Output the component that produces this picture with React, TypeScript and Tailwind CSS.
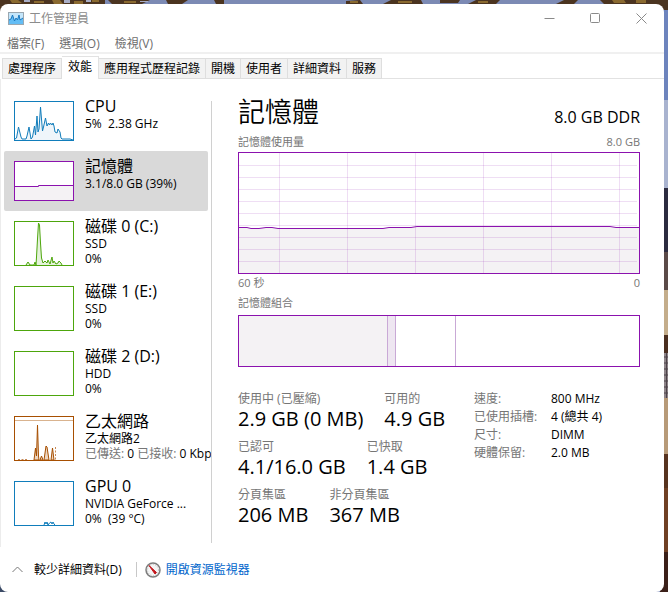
import type { ReactNode } from "react";

const latinAndCjk =
  "font-['Open_Sans','Noto_Sans_CJK_TC',sans-serif]";

const tabs = ["處理程序", "效能", "應用程式歷程記錄", "開機", "使用者", "詳細資料", "服務"];
const menus = ["檔案(F)", "選項(O)", "檢視(V)"];

function Desktop() {
  return (
    <svg
      className="absolute inset-0 h-full w-full"
      viewBox="0 0 668 592"
      preserveAspectRatio="none"
      aria-hidden="true"
    >
      <rect width="668" height="592" fill="#7c8ab4" />
      <g fill="#4b3420">
        <rect x="0" y="0" width="105" height="12" />
        <path d="M108 0h42l-8 4h-30zM166 0h22l-6 4h-14zM214 0h10v4h-8zM346 1l14-1 3 4h-17zM383 4l8-4h30l2 4zM440 0h20l-2 3h-18zM468 4l8-4h24l-4 4zM556 4l8-4h14l-4 4zM600 0h68v10h-8l-4-6h-52z" />
        <path d="M652 0h16v9l-5 2z" />
      </g>
      <g fill="#8a6a30">
        <path d="M10 0h8l4 3h-10zM34 1h10v2h-10zM52 0h8l3 4h-9zM74 1h9v3h-9zM92 0h7v2h-7zM124 1h12v2h-12zM350 1h8v2h-8zM398 1h14v2h-14zM478 1h10v2h-10zM612 0h12l2 3h-12zM636 0h10v3h-10z" />
      </g>
      <path d="M24 0h6v2h-6zM64 0h6v3h-6zM86 0h5v2h-5zM140 1h8v1h-8z" fill="#a9aec6" />
      <rect x="660" y="10" width="8" height="90" fill="#6d84bd" />
      <rect x="660" y="100" width="8" height="88" fill="#a9b3cf" />
      <rect x="660" y="188" width="8" height="64" fill="#2c2b40" />
      <rect x="660" y="252" width="8" height="38" fill="#5b4a48" />
      <rect x="660" y="290" width="8" height="45" fill="#c4ad8b" />
      <rect x="660" y="335" width="8" height="18" fill="#4a2e20" />
      <rect x="660" y="353" width="8" height="45" fill="#8d8388" />
      <path d="M664 357h4M664 363h4M664 369h4M664 375h4M664 381h4M664 387h4M664 393h4M666.500 353v45" stroke="#4d444a" />
      <rect x="660" y="398" width="8" height="56" fill="#b79a78" />
      <rect x="660" y="454" width="8" height="34" fill="#57331f" />
      <rect x="660" y="488" width="8" height="64" fill="#6f4024" />
      <rect x="660" y="552" width="8" height="40" fill="#3b2019" />
      <rect x="0" y="580" width="12" height="12" fill="#3b4a66" />
    </svg>
  );
}

function TitleBar() {
  return (
    <header className="flex h-[29px] items-center pl-2">
      <svg width="16" height="13" viewBox="0 0 16 13" aria-hidden="true">
        <rect x="0.5" y="0.5" width="15" height="12" fill="#c4e6fb" stroke="#9aa7b0" />
        <path d="M1 8 3 7 4.500 3 6.500 9 8 6 9.500 8 11 3 12 8 15 6V12H1z" fill="#63bdf5" />
        <path d="M1 8 3 7 4.500 3 6.500 9 8 6 9.500 8 11 3 12 8 15 6" fill="none" stroke="#1978c0" />
      </svg>
      <h1 className="ml-[5px] flex-1 text-[12px] text-[#8c8c8c]">工作管理員</h1>
      <div className="mr-[17px] flex gap-[35px] text-[#8a8a8a]">
        <button type="button" aria-label="最小化">
          <svg width="11" height="11" viewBox="0 0 11 11" fill="none" stroke="currentColor">
            <path d="M0.500 5.500H10.500" />
          </svg>
        </button>
        <button type="button" aria-label="最大化">
          <svg width="11" height="11" viewBox="0 0 11 11" fill="none" stroke="currentColor">
            <rect x="0.500" y="0.500" width="9" height="9" rx="1" />
          </svg>
        </button>
        <button type="button" aria-label="關閉">
          <svg width="11" height="11" viewBox="0 0 11 11" fill="none" stroke="currentColor">
            <path d="M0.500 0.500 10.500 10.500M10.500 0.500 0.500 10.500" />
          </svg>
        </button>
      </div>
    </header>
  );
}

function MenuBar() {
  return (
    <nav className="flex h-[21px] items-start gap-[15px] border-b-2 border-[#f0f0f0] pl-[7px] text-[12px] leading-[21px] text-[#6d6d6d]">
      {menus.map((m) => (
        <button key={m} type="button">
          {m}
        </button>
      ))}
    </nav>
  );
}

function TabBar() {
  return (
    <div className="flex pt-0.5 pl-0.5 text-[12px]" role="tablist">
      {tabs.map((t) =>
        t === "效能" ? (
          <button
            key={t}
            type="button"
            role="tab"
            aria-selected="true"
            className="h-[23px] border-t border-r border-[#e2e2e2] px-1.5 pb-0.5"
          >
            {t}
          </button>
        ) : (
          <button
            key={t}
            type="button"
            role="tab"
            aria-selected="false"
            className="mt-0.5 h-[21px] border border-l-0 border-[#dedede] bg-[#f2f2f2] px-[5px] first:border-l"
          >
            {t}
          </button>
        ),
      )}
      <div className="flex-1 border-b border-[#e2e2e2]" />
    </div>
  );
}

function Thumb({ h, color, children }: { h: number; color: string; children?: ReactNode }) {
  return (
    <svg className="shrink-0" width="60" height={h} viewBox={`0 0 60 ${h}`} aria-hidden="true">
      <rect x="0.500" y="0.500" width="59" height={h - 1} fill="#fff" />
      {children}
      <rect x="0.500" y="0.500" width="59" height={h - 1} fill="none" stroke={color} />
    </svg>
  );
}

type Item = { title: string; lines: ReactNode[]; thumb: ReactNode; selected?: boolean };

const cpuLine =
  "M1 38 2.500 37 4.500 26 7 36 8 38 12 38 13 35 15 26 17 38 18.500 36 20.500 25 21.500 34 23 15 24 31 25 28 26.500 6 28.500 30 29.500 26 31.500 17 33 25 34.500 22 35.500 24 36.500 22 38 24 39 22 40 25 41 31 43 32 44 28 46 31 47 37 48 38 56 38 59 39";
const diskLine =
  "M12 44 14 41 16 44 20 44 21 41 22 44 22.500 36 23.500 18 24.500 2 25.500 4 26.500 22 27.500 37 29 42 31 40 33 42 34 39 36 43 38 36 39 42 40 40 42 43 44 42 45 40 47 42 48 44";

const items: Item[] = [
  {
    title: "CPU",
    lines: ["5%  2.38 GHz"],
    thumb: (
      <Thumb h={40} color="#117dbb">
        <path d={`${cpuLine}V40H1z`} fill="#eff5fa" />
        <path d={cpuLine} fill="none" stroke="#117dbb" />
      </Thumb>
    ),
  },
  {
    title: "記憶體",
    lines: ["3.1/8.0 GB (39%)"],
    selected: true,
    thumb: (
      <Thumb h={40} color="#8b12ae">
        <path d="M1 25.500H24.500V24.500H59V39H1z" fill="#f4f2f4" />
        <path d="M1 25.500H24.500V24.500H59" fill="none" stroke="#8b12ae" />
      </Thumb>
    ),
  },
  {
    title: "磁碟 0 (C:)",
    lines: ["SSD", "0%"],
    thumb: (
      <Thumb h={45} color="#4da60c">
        <path d={`${diskLine}z`} fill="#e4f2da" />
        <path d={diskLine} fill="none" stroke="#4da60c" />
      </Thumb>
    ),
  },
  { title: "磁碟 1 (E:)", lines: ["SSD", "0%"], thumb: <Thumb h={45} color="#4da60c" /> },
  { title: "磁碟 2 (D:)", lines: ["HDD", "0%"], thumb: <Thumb h={45} color="#4da60c" /> },
  {
    title: "乙太網路",
    lines: [
      "乙太網路2",
      <>
        <span className="text-[#767676]">已傳送:</span> 0 <span className="text-[#767676]">已接收:</span> 0 Kbps
      </>,
    ],
    thumb: (
      <Thumb h={45} color="#a74f01">
        <path d="M1 4.500H59" stroke="#d9b38f" />
        <path d="M20 44 21.500 32 22.500 40 23.500 9 24.500 40 25 44zM26 44 27.500 40 29 44zM30 44 32 30 33 31 35 44zM37 44 38.500 32 40 44z" fill="#ecd5c0" stroke="#a74f01" />
        <path d="M4 43.500H13M41.500 31V44" stroke="#c58a5a" strokeDasharray="2 1.500" />
      </Thumb>
    ),
  },
  {
    title: "GPU 0",
    lines: ["NVIDIA GeForce ...", "0%  (39 °C)"],
    thumb: (
      <Thumb h={45} color="#117dbb">
        <path d="M30 44 31 41 32 43 33 41 34 44 35.500 42 37 41 38 43 39 41 40 43 41 44" fill="none" stroke="#117dbb" />
      </Thumb>
    ),
  },
];

function Sidebar() {
  return (
    <ul className="w-[211px] shrink-0 overflow-hidden border-l border-[#ececec] pt-3 pb-[11px] pl-[3px]">
      {items.map((it) => (
        <li key={it.title}>
          <button
            type="button"
            className={`flex w-[204px] items-start rounded-xs pl-2.5 text-left ${
              it.lines.length > 1 ? "h-[65px]" : "h-[60px]"
            } ${it.selected ? "bg-[#d9d9d9]" : ""}`}
          >
            <span className="flex pt-2.5">{it.thumb}</span>
            <span className="ml-[11px] flex flex-col pt-[5px] text-[12px] leading-[15px] whitespace-pre">
              <span className="text-[16px] leading-5">{it.title}</span>
              {it.lines.map((l, i) => (
                <span key={i}>{l}</span>
              ))}
            </span>
          </button>
        </li>
      ))}
    </ul>
  );
}

const usage =
  "M0 74.500H8L12 75.500H20L27 74.500H33L39 75.500H144L150 74.500H172L178 73.500H371L377 74.500H400";

function UsageChart() {
  return (
    <svg
      className="h-[122px] w-full border border-[#8b12ae]"
      viewBox="0 0 400 120"
      preserveAspectRatio="none"
      role="img"
      aria-label="記憶體使用量"
    >
      <path d={`${usage}V120H0z`} fill="#f4f2f4" />
      <path
        d="M40.500 0V120M108.500 0V120M176.500 0V120M244.500 0V120M312.500 0V120M380.500 0V120M0 12.500H398M0 24.500H398M0 36.500H398M0 48.500H398M0 60.500H398M0 72.500H398M0 84.500H398M0 96.500H398M0 108.500H398"
        stroke="#8b12ae"
        strokeOpacity="0.14"
        fill="none"
      />
      <path d={usage} fill="none" stroke="#8b12ae" />
    </svg>
  );
}

const stats = [
  [
    ["使用中 (已壓縮)", "2.9 GB (0 MB)"],
    ["可用的", "4.9 GB"],
  ],
  [
    ["已認可", "4.1/16.0 GB"],
    ["已快取", "1.4 GB"],
  ],
  [
    ["分頁集區", "206 MB"],
    ["非分頁集區", "367 MB"],
  ],
];

const specs = [
  ["速度:", "800 MHz"],
  ["已使用插槽:", "4 (總共 4)"],
  ["尺寸:", "DIMM"],
  ["硬體保留:", "2.0 MB"],
];

function Memory() {
  return (
    <main className="min-w-0 flex-1 pt-3 pr-6 pl-[26px]">
      <div className="flex h-[41px] items-end justify-between">
        <h2 className="text-[27px] leading-10 font-[350]">記憶體</h2>
        <span className="text-[16px] leading-[30px]">8.0 GB DDR</span>
      </div>
      <div className="flex justify-between text-[11px] leading-5 text-[#767676]">
        <span>記憶體使用量</span>
        <span>8.0 GB</span>
      </div>
      <UsageChart />
      <div className="flex justify-between text-[11px] leading-[18px] text-[#767676]">
        <span>60 秒</span>
        <span>0</span>
      </div>
      <div className="mt-0.5 mb-[3px] text-[11px] leading-[18px] text-[#767676]">記憶體組合</div>
      <div className="flex h-13 border border-[#8b12ae]">
        <div className="w-[37%] bg-[#f4f2f4]" />
        <div className="w-[9px] border-x border-[#c9a9d6] bg-[#eee6f1]" />
        <div className="w-[15%] border-r border-[#c9a9d6]" />
      </div>
      <div className="mt-[23px] flex">
        <div className="flex w-[236px] shrink-0 flex-col gap-2">
          {stats.map((row) => (
            <dl key={row[0][0]} className="flex gap-[21px] whitespace-nowrap">
              {row.map(([k, v]) => (
                <div key={k}>
                  <dt className="text-[12px] leading-[18px] text-[#767676]">{k}</dt>
                  <dd className="text-[20px] leading-[22px]">{v}</dd>
                </div>
              ))}
            </dl>
          ))}
        </div>
        <table className="self-start text-left text-[12px] leading-[18px] whitespace-nowrap">
          <tbody>
            {specs.map(([k, v]) => (
              <tr key={k}>
                <th scope="row" className="w-[77px] p-0 font-normal text-[#767676]">
                  {k}
                </th>
                <td className="p-0">{v}</td>
              </tr>
            ))}
          </tbody>
        </table>
      </div>
    </main>
  );
}

function Footer() {
  return (
    <footer className="flex h-[45px] items-center pl-3 text-[12px]">
      <button type="button" className="flex items-center gap-[11px]">
        <svg width="11" height="7" viewBox="0 0 11 7" fill="none" stroke="#777" aria-hidden="true">
          <path d="M0.500 6 5.500 1 10.500 6" />
        </svg>
        較少詳細資料(D)
      </button>
      <div className="mr-2 ml-3.5 h-[15px] w-px bg-[#c8c8c8]" />
      <a href="#resource-monitor" className="flex items-center gap-[5px] text-[#0066cc]">
        <svg width="16" height="16" viewBox="0 0 16 16" aria-hidden="true">
          <circle cx="8" cy="8" r="7" fill="#f4f4f4" stroke="#7d7d7d" strokeWidth="1.500" />
          <circle cx="8" cy="8" r="5.500" fill="none" stroke="#b9b9b9" strokeDasharray="1 1.500" />
          <path d="M4 3.500 11.500 10.500 10 12z" fill="#c4161c" stroke="#c4161c" />
        </svg>
        開啟資源監視器
      </a>
    </footer>
  );
}

export default function App() {
  return (
    <div className={`relative flex min-h-screen flex-col pt-1 pr-1 text-black ${latinAndCjk}`}>
      <Desktop />
      <div className="relative flex flex-1 flex-col rounded-lg bg-white">
        <TitleBar />
        <MenuBar />
        <TabBar />
        <div className="flex flex-1">
          <Sidebar />
          <div className="mt-[22px] mb-1 w-px shrink-0 bg-[#d0d0d0]" />
          <Memory />
        </div>
        <Footer />
      </div>
    </div>
  );
}
